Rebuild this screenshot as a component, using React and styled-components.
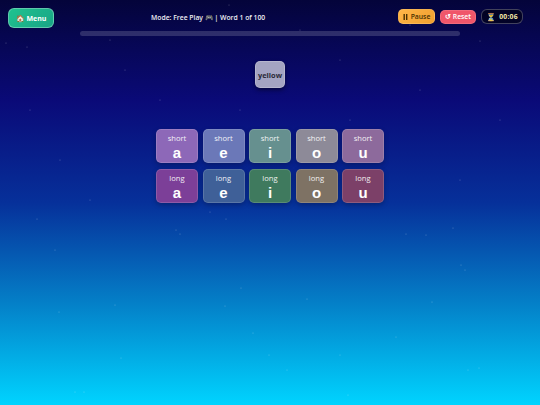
import React from "react";
import styled, { createGlobalStyle } from "styled-components";

const GlobalStyle = createGlobalStyle`
  html, body { margin: 0; padding: 0; height: 100%; }
  body { font-family: "Open Sans", "DejaVu Sans", sans-serif; overflow: hidden; }
  #root { height: 100%; }
`;

const Page = styled.div`
  position: relative;
  width: 540px;
  height: 405px;
  overflow: hidden;
  background: linear-gradient(180deg, #04043a 0%, #0a0a78 25%, #06309a 50%, #0480c8 75%, #00d4ff 100%);
`;

const Stars = styled.svg`
  position: absolute;
  inset: 0;
  pointer-events: none;
`;

const Content = styled.div`
  position: relative;
  display: flex;
  flex-direction: column;
  align-items: center;
`;

const Header = styled.div`
  display: flex;
  align-items: flex-start;
  align-self: stretch;
  padding: 8px 17px 0 8px;
  height: 23px;
`;

const MenuButton = styled.button`
  width: 46px;
  height: 20px;
  padding: 0;
  border: 1px solid rgba(255, 255, 255, 0.3);
  border-radius: 6px;
  background: linear-gradient(135deg, #1fc28f, #19a586);
  color: #fff;
  font: 700 7px "Open Sans", sans-serif;
`;

const Status = styled.div`
  margin: 5px 0 0 97px;
  color: #f0f0f5;
  font-size: 6.8px;
  font-weight: 600;
  white-space: nowrap;
`;

const Controls = styled.div`
  display: flex;
  align-items: center;
  gap: 5px;
  margin: 1px 0 0 auto;
`;

const ControlButton = styled.button`
  display: flex;
  align-items: center;
  justify-content: center;
  gap: 3px;
  height: ${(p) => p.$h}px;
  width: ${(p) => p.$w}px;
  padding: 0;
  border: 1px solid rgba(255, 255, 255, 0.12);
  border-radius: 5px;
  background: ${(p) => p.$bg};
  color: ${(p) => p.$color};
  font: 600 6.8px "Open Sans", sans-serif;
`;

const PauseIcon = styled.svg`
  width: 5px;
  height: 6px;
`;

const Timer = styled.div`
  display: flex;
  align-items: center;
  justify-content: center;
  gap: 3px;
  width: 42px;
  height: 15px;
  box-sizing: border-box;
  border: 1px solid rgba(255, 255, 255, 0.25);
  border-radius: 6px;
  background: rgba(0, 0, 0, 0.45);
  color: #f4e9a8;
  font-size: 6.8px;
  font-weight: 700;
  letter-spacing: 0.2px;
`;

const HourGlass = styled.span`
  font-size: 8px;
  letter-spacing: 0;
`;

const Progress = styled.div`
  width: 380px;
  height: 5px;
  border-radius: 3px;
  background: rgba(255, 255, 255, 0.16);
`;

const WordCard = styled.div`
  display: flex;
  align-items: center;
  justify-content: center;
  width: 30px;
  height: 27px;
  margin-top: 25px;
  box-sizing: border-box;
  border: 1px solid rgba(255, 255, 255, 0.2);
  border-radius: 5px;
  background: #a4a4c2;
  color: #2a2a38;
  font-size: 7.4px;
  font-weight: 700;
  box-shadow: 0 2px 4px rgba(0, 0, 0, 0.45);
`;

const Grid = styled.div`
  display: grid;
  grid-template-columns: repeat(5, 42px);
  grid-auto-rows: 34px;
  gap: 6px 4.5px;
  margin-top: 41px;
`;

const Tile = styled.div`
  display: flex;
  flex-direction: column;
  align-items: center;
  box-sizing: border-box;
  padding-top: 3px;
  border: 1px solid rgba(255, 255, 255, 0.14);
  border-radius: 5px;
  background: ${(p) => p.$bg};
  color: #fff;
  box-shadow: 0 2px 5px rgba(0, 0, 0, 0.25);
`;

const TileLabel = styled.span`
  font-size: 7.6px;
  line-height: 11px;
  opacity: 0.9;
`;

const TileVowel = styled.span`
  font-family: "Liberation Sans", sans-serif;
  font-size: 15px;
  line-height: 17px;
  font-weight: 700;
`;

const vowels = [
  ["short", "a", "#8d68b8"],
  ["short", "e", "#6b78b8"],
  ["short", "i", "#66908f"],
  ["short", "o", "#8d8a98"],
  ["short", "u", "#8d6a9c"],
  ["long", "a", "#7c3f98"],
  ["long", "e", "#3f6098"],
  ["long", "i", "#3f7a5e"],
  ["long", "o", "#7e7264"],
  ["long", "u", "#7c4068"],
];

const starDots = [
  [229, 5], [6, 43], [27, 47], [125, 70], [60, 160], [300, 30], [410, 25], [480, 41],
  [110, 40], [340, 60], [420, 90], [500, 120], [30, 110], [90, 200], [460, 180], [350, 120],
  [160, 100], [240, 110], [210, 212], [180, 234], [37, 219], [55, 250], [115, 305], [59, 312],
  [241, 288], [225, 306], [307, 299], [432, 302], [253, 333], [396, 337], [269, 355], [340, 355],
  [287, 370], [479, 368], [468, 370], [406, 234], [453, 228], [426, 235], [348, 395], [75, 392],
  [84, 392], [121, 358], [226, 219], [176, 230], [461, 265], [465, 270],
];

const App = () => {
  return (
    <Page>
      <GlobalStyle />
      <Stars width="540" height="405">
        {starDots.map(([x, y], i) => (
          <circle key={i} cx={x} cy={y} r="0.6" fill="#fff" opacity="0.3" />
        ))}
      </Stars>
      <Content>
        <Header>
          <MenuButton>🏠 Menu</MenuButton>
          <Status>Mode: Free Play 🎮 | Word 1 of 100</Status>
          <Controls>
            <ControlButton $w={37} $h={15} $bg="linear-gradient(135deg, #ffb648, #f0a030)" $color="#4a3000">
              <PauseIcon viewBox="0 0 5 6">
                <rect x="0.5" width="1.4" height="6" fill="#4a3000" />
                <rect x="3" width="1.4" height="6" fill="#4a3000" />
              </PauseIcon>
              Pause
            </ControlButton>
            <ControlButton $w={36} $h={14} $bg="#f0566a" $color="#fff">
              ↺ Reset
            </ControlButton>
            <Timer>
              <HourGlass>⏳</HourGlass>
              00:06
            </Timer>
          </Controls>
        </Header>
        <Progress />
        <WordCard>yellow</WordCard>
        <Grid>
          {vowels.map(([label, vowel, bg]) => (
            <Tile key={label + vowel} $bg={bg}>
              <TileLabel>{label}</TileLabel>
              <TileVowel>{vowel}</TileVowel>
            </Tile>
          ))}
        </Grid>
      </Content>
    </Page>
  );
};

export default App;
